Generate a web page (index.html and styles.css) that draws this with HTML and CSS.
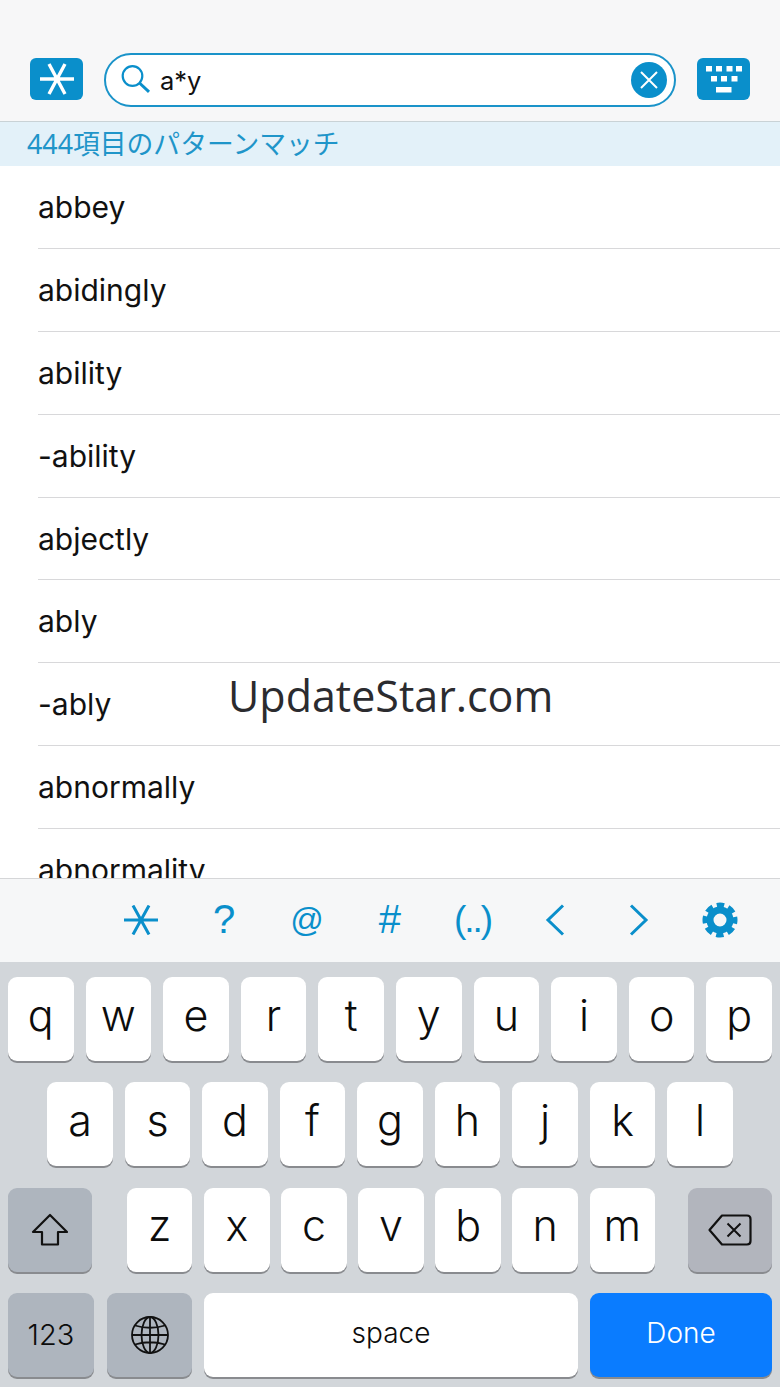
FILE: index.html
```html
<!DOCTYPE html>
<html>
<head>
<meta name="viewport" content="width=device-width, initial-scale=1">
<link rel="stylesheet" href="styles.css">
<title>Pattern match</title>
</head>
<body>

<div class="topbar">
  <button class="squareBtn">
    <svg width="36" height="32" viewBox="0 0 36 32"><path d="M1 16H35M10 1L26 31M26 1L10 31" stroke="#fff" stroke-width="3.4" fill="none"/></svg>
  </button>
  <div class="searchbox">
    <svg class="searchIcon" width="30" height="28" viewBox="0 0 30 28"><circle cx="11.500" cy="11" r="9.800" stroke="#0a8fcb" stroke-width="2.200" fill="none"/><path d="M18.500 18L28 26.800" stroke="#0a8fcb" stroke-width="3" fill="none"/></svg>
    <span class="searchText">a*y</span>
    <span class="clearBtn">
      <svg width="20" height="20" viewBox="0 0 20 20"><path d="M2 2L18 18M18 2L2 18" stroke="#fff" stroke-width="2" fill="none"/></svg>
    </span>
  </div>
  <button class="squareBtn">
    <svg width="36" height="27" viewBox="0 0 36 27"><path d="M0 0h6v5.500H0zM10 0h6v5.500h-6zM20.500 0h6v5.500h-6zM30 0h6v5.500h-6zM5 10h6v5.500H5zM15 10h6v5.500h-6zM25.500 10h6v5.500h-6zM10 21h15.500v5.500H10z" fill="#fff"/></svg>
  </button>
</div>

<div class="matchbar">444項目のパターンマッチ</div>

<div class="wordlist">
  <div class="word">abbey</div>
  <div class="word">abidingly</div>
  <div class="word">ability</div>
  <div class="word">-ability</div>
  <div class="word">abjectly</div>
  <div class="word">ably</div>
  <div class="word">-ably</div>
  <div class="word">abnormally</div>
  <div class="word">abnormality</div>
</div>

<div class="toolbar">
  <span class="tool"><svg width="34" height="30" viewBox="0 0 34 30"><path d="M0 15H34M9 0.500L25 29.500M25 0.500L9 29.500" stroke="#0a8fcb" stroke-width="3" fill="none"/></svg></span>
  <span class="tool">?</span>
  <span class="tool toolAt">@</span>
  <span class="tool">#</span>
  <span class="tool toolParens">(..)</span>
  <span class="tool"><svg width="20" height="32" viewBox="0 0 20 32"><path d="M18 1.500L3 16L18 30.500" stroke="#0a8fcb" stroke-width="3" fill="none"/></svg></span>
  <span class="tool toolNext"><svg width="20" height="32" viewBox="0 0 20 32"><path d="M2 1.500L17 16L2 30.500" stroke="#0a8fcb" stroke-width="3" fill="none"/></svg></span>
  <span class="tool toolGear"><svg width="36" height="36" viewBox="0 0 36 36"><circle cx="18" cy="18" r="10" stroke="#0a8fcb" stroke-width="7" fill="none"/><circle cx="18" cy="18" r="15" stroke="#0a8fcb" stroke-width="5" stroke-dasharray="7.400 4.380" stroke-dashoffset="3.700" fill="none"/></svg></span>
</div>

<div class="keyboard">
  <div class="keyrow rowSpread">
    <span class="key">q</span><span class="key">w</span><span class="key">e</span><span class="key">r</span><span class="key">t</span><span class="key">y</span><span class="key">u</span><span class="key">i</span><span class="key">o</span><span class="key">p</span>
  </div>
  <div class="keyrow rowMiddle">
    <span class="key">a</span><span class="key">s</span><span class="key">d</span><span class="key">f</span><span class="key">g</span><span class="key">h</span><span class="key">j</span><span class="key">k</span><span class="key">l</span>
  </div>
  <div class="keyrow rowSpread">
    <span class="key grey wideKey">
      <svg width="38" height="34" viewBox="0 0 38 34"><path d="M19 2L36 19H27V31.500H11V19H2Z" stroke="#111" stroke-width="2.200" stroke-linejoin="round" fill="none"/></svg>
    </span>
    <div class="letterGroup">
      <span class="key">z</span><span class="key">x</span><span class="key">c</span><span class="key">v</span><span class="key">b</span><span class="key">n</span><span class="key">m</span>
    </div>
    <span class="key greyDark wideKey">
      <svg width="44" height="32" viewBox="0 0 44 32"><path d="M14 1.500H39Q42.500 1.500 42.500 5V27Q42.500 30.500 39 30.500H14L1.500 16Z" stroke="#111" stroke-width="2.200" stroke-linejoin="round" fill="none"/><path d="M19.500 9.500L32.500 22.500M32.500 9.500L19.500 22.500" stroke="#111" stroke-width="2" fill="none"/></svg>
    </span>
  </div>
  <div class="keyrow">
    <span class="key grey numKey">123</span>
    <span class="key grey globeKey">
      <svg width="38" height="38" viewBox="0 0 38 38"><g stroke="#111" stroke-width="1.800" fill="none"><circle cx="19" cy="19" r="18"/><ellipse cx="19" cy="19" rx="8.500" ry="18"/><path d="M19 1V37M1 19H37M4 9.500Q19 14 34 9.500M4 28.500Q19 24 34 28.500"/></g></svg>
    </span>
    <span class="key spaceKey">space</span>
    <span class="key doneKey">Done</span>
  </div>
</div>

<div class="watermark">UpdateStar.com</div>

</body>
</html>
```

FILE: styles.css
```css
body {
  font-family: Inter, "Liberation Sans", sans-serif;
  margin: 0;
  height: 1387px;
  overflow: hidden;
  display: flex;
  flex-direction: column;
  position: relative;
  background-color: white;
  color: #111;
}

/* top bar */
.topbar {
  height: 122px;
  box-sizing: border-box;
  padding: 53px 30px 14px;
  display: flex;
  align-items: flex-start;
  gap: 21px;
  background-color: #f7f7f8;
  border-bottom: 1px solid #c9d2d6;
  flex: none;
}

.squareBtn {
  width: 53px;
  height: 42px;
  margin-top: 5px;
  padding: 0;
  border: none;
  border-radius: 6px;
  background-color: #0a8fcb;
  display: flex;
  align-items: center;
  justify-content: center;
  flex: none;
}

.searchbox {
  flex: 1;
  height: 54px;
  box-sizing: border-box;
  border: 2.500px solid #1a93c9;
  border-radius: 27px;
  background-color: white;
  display: flex;
  align-items: center;
  padding: 0 7px 0 15px;
}

.searchIcon {
  flex: none;
  margin-top: -2px;
}

.searchText {
  flex: 1;
  margin-left: 9px;
  font-size: 25.500px;
  color: #111;
}

.clearBtn {
  width: 36px;
  height: 36px;
  border-radius: 50%;
  background-color: #0a8fcb;
  display: flex;
  align-items: center;
  justify-content: center;
}

/* match count */
.matchbar {
  height: 44px;
  flex: none;
  box-sizing: border-box;
  padding-left: 27px;
  line-height: 44px;
  font-family: "Noto Sans", "Noto Sans CJK JP", sans-serif;
  font-size: 26.800px;
  color: #1f95c9;
  background-color: #e3f1f9;
}

/* list */
.wordlist {
  flex: 1;
  overflow: hidden;
  min-height: 0;
}

.word {
  height: 82.900px;
  box-sizing: border-box;
  margin-left: 38px;
  line-height: 83px;
  font-size: 30px;
  font-weight: 370;
  border-bottom: 1px solid #d8d8da;
}

/* pattern keys */
.toolbar {
  height: 84px;
  flex: none;
  box-sizing: border-box;
  padding: 0 0 2px 100px;
  display: flex;
  align-items: center;
  background-color: #f6f7f8;
  border-top: 1px solid #d5d6d8;
}

.tool {
  width: 82.800px;
  display: flex;
  align-items: center;
  justify-content: center;
  font-family: "Liberation Sans", sans-serif;
  font-size: 40px;
  color: #0a8fcb;
}

.toolAt {
  font-size: 33px;
}

.toolParens {
  font-size: 37px;
  letter-spacing: -2px;
}

.toolNext {
  padding-left: 2px;
  box-sizing: border-box;
}

.toolGear {
  padding-right: 2px;
  box-sizing: border-box;
}

/* keyboard */
.keyboard {
  height: 425px;
  flex: none;
  box-sizing: border-box;
  padding: 15px 8px 0;
  display: flex;
  flex-direction: column;
  gap: 21.300px;
  background-color: #d2d6da;
}

.keyrow {
  height: 84px;
  display: flex;
  gap: 12px;
}

.rowSpread {
  justify-content: space-between;
  gap: 0;
}

.rowMiddle {
  justify-content: center;
}

.letterGroup {
  display: flex;
  gap: 11.600px;
  margin-left: 2px;
}

.key {
  width: 65.500px;
  flex: none;
  height: 84px;
  box-sizing: border-box;
  background-color: white;
  border-radius: 9px;
  box-shadow: 0 2px 0 #898b8f;
  display: flex;
  align-items: center;
  justify-content: center;
  font-size: 43px;
  font-weight: 300;
  padding-bottom: 9px;
  color: #0c0c0c;
}

.grey {
  background-color: #aeb5be;
  padding-bottom: 0;
}

.greyDark {
  background-color: #b2b5bd;
  padding-bottom: 0;
}

.wideKey {
  width: 84px;
}

.numKey {
  width: 86px;
  font-size: 29px;
  font-weight: 350;
}

.globeKey {
  width: 85px;
  margin-left: 1px;
}

.spaceKey {
  flex: 1;
  font-size: 28px;
  font-weight: 350;
  padding-bottom: 4px;
}

.doneKey {
  width: 182px;
  font-size: 28px;
  font-weight: 350;
  padding-bottom: 4px;
  color: white;
  background-color: #0a7cff;
}

/* sits over the list */
.watermark {
  position: absolute;
  left: 228px;
  top: 668px;
  font-family: "Open Sans", sans-serif;
  font-size: 43px;
  line-height: 56px;
  color: #2b2b2f;
}
```
